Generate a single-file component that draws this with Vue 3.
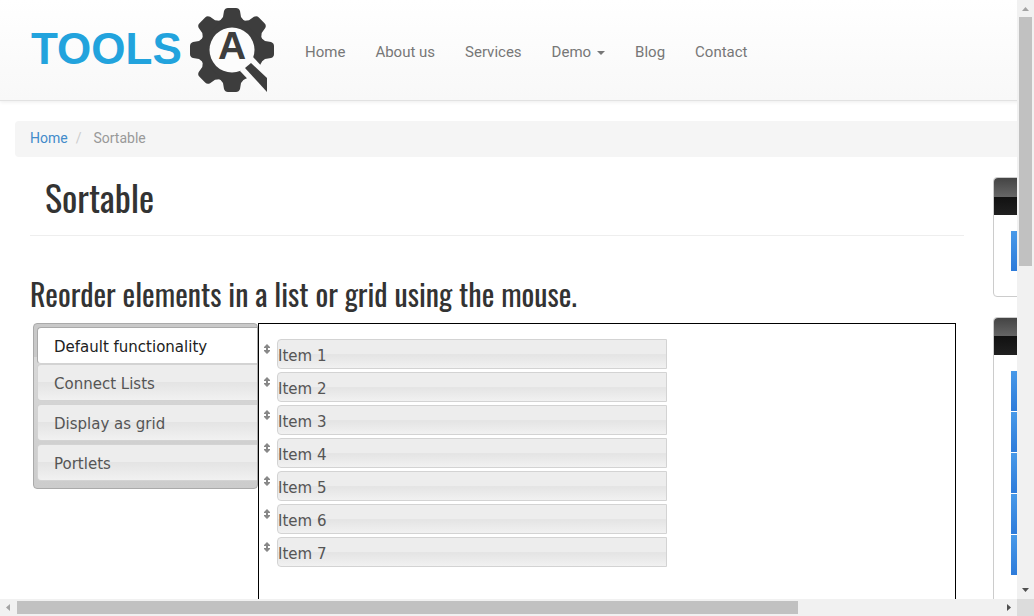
<script setup>
const links = ['Home', 'About us', 'Services', 'Demo', 'Blog', 'Contact']
const tabs = ['Default functionality', 'Connect Lists', 'Display as grid', 'Portlets']
const items = [1, 2, 3, 4, 5, 6, 7].map((n) => `Item ${n}`)
const teeth = [0, 45, 90, 180, 225, 270, 315]
</script>

<template>
  <div class="window">
    <div class="viewport">
      <div class="page">
        <header class="navbar">
          <a class="brand" href="#" aria-label="TOOLS QA">
            <svg width="250" height="100" viewBox="0 0 250 100">
              <text class="wordmark" x="3" y="64">TOOLS</text>
              <g transform="translate(204 50)" fill="#3d3d3d">
                <circle r="32" />
                <path
                  v-for="angle in teeth"
                  :key="angle"
                  :transform="`rotate(${angle})`"
                  d="M-13-28 L-9-33 L-8-39 Q-7-42-4-42 H4 Q7-42 8-39 L9-33 L13-28Z"
                />
                <circle r="22.500" fill="#fcfcfc" />
                <path d="M8 21 L21 7 L35 22 V42 L27 41Z" fill="#fbfbfb" />
                <path d="M13 18 L19 13 L35 28 V42Z" />
                <text class="mark" x="0" y="9" text-anchor="middle">A</text>
              </g>
            </svg>
          </a>
          <nav class="links">
            <a v-for="link in links" :key="link" href="#">{{ link }}<i v-if="link === 'Demo'" class="caret"></i></a>
          </nav>
        </header>

        <nav class="breadcrumb">
          <a href="#">Home</a><span class="slash">/</span><span>Sortable</span>
        </nav>

        <div class="columns">
          <main>
            <h1>Sortable</h1>
            <hr />
            <h2>Reorder elements in a list or grid using the mouse.</h2>
            <div class="tabs">
              <div class="tablist" role="tablist">
                <button
                  v-for="(tab, i) in tabs"
                  :key="tab"
                  type="button"
                  role="tab"
                  :aria-selected="i === 0"
                  :class="{ active: i === 0 }"
                >{{ tab }}</button>
              </div>
              <div class="panel" role="tabpanel">
                <ul>
                  <li v-for="item in items" :key="item">
                    <svg width="8" height="10" viewBox="0 0 8 10">
                      <path d="M4 0 L7 3 V4 H5 V6 H7 V7 L4 10 L1 7 V6 H3 V4 H1 V3Z" fill="#888" />
                    </svg>
                    <div class="item">{{ item }}</div>
                  </li>
                </ul>
              </div>
            </div>
          </main>
          <aside>
            <section class="widget">
              <div class="widget-head"></div>
              <div class="widget-body"><a href="#" aria-label="Registration"></a></div>
            </section>
            <section class="widget tall">
              <div class="widget-head"></div>
              <div class="widget-body"><a v-for="n in 5" :key="n" href="#" :aria-label="`Interaction ${n}`"></a></div>
            </section>
          </aside>
        </div>
      </div>
    </div>

    <div class="bar vertical">
      <svg width="17" height="17"><path d="M5 11 L8.500 7 L12 11Z" fill="#a3a3a3" /></svg>
      <div class="track"><div class="thumb"></div></div>
      <svg width="17" height="17"><path d="M5 6 H12 L8.500 10Z" fill="#505050" /></svg>
    </div>
    <div class="bar horizontal">
      <svg width="17" height="17"><path d="M10 5 V12 L6 8.500Z" fill="#a3a3a3" /></svg>
      <div class="track"><div class="thumb"></div></div>
      <svg width="17" height="17"><path d="M7 5 V12 L11 8.500Z" fill="#505050" /></svg>
    </div>
    <div class="corner"></div>
  </div>
</template>

<style>
body {
  margin: 0;
  background: #fff;
}
</style>

<style scoped>
* {
  box-sizing: border-box;
}
.window {
  display: grid;
  grid-template: minmax(0, 1fr) 17px / minmax(0, 1fr) 17px;
  height: 100vh;
  font-family: Roboto, sans-serif;
  font-size: 14px;
  line-height: 20px;
  color: #333;
}
.viewport {
  overflow: hidden;
}
.page {
  min-width: 1280px;
}
a {
  text-decoration: none;
}
.navbar {
  display: flex;
  height: 101px;
  padding-left: 28px;
  background: linear-gradient(#fff, #f8f8f8);
  border-bottom: 1px solid #e2e2e2;
  box-shadow: 0 1px 4px rgba(0, 0, 0, 0.08);
}
.brand svg {
  display: block;
}
.brand {
  width: 262px;
}
.wordmark {
  font: bold 44px "Liberation Sans", sans-serif;
  fill: #22a3dd;
}
.mark {
  font: bold 39px "Liberation Sans", sans-serif;
}
.links {
  display: flex;
  align-items: center;
  padding-top: 3px;
}
.links a {
  padding: 15px;
  font-size: 15px;
  color: #777;
}
.caret {
  display: inline-block;
  margin-left: 6px;
  vertical-align: middle;
  border-top: 4px solid #777;
  border-left: 4px solid transparent;
  border-right: 4px solid transparent;
}
.breadcrumb {
  margin: 20px 15px;
  padding: 7px 15px 9px;
  background: #f5f5f5;
  border-radius: 4px;
  color: #999;
}
.breadcrumb a {
  color: #428bca;
}
.slash {
  padding: 0 12px 0 8px;
  color: #ccc;
}
.columns {
  display: grid;
  grid-template-columns: minmax(0, 1fr) 257px;
  gap: 29px;
  padding: 0 30px;
}
h1,
h2 {
  margin: 0;
  font-family: Oswald, "Liberation Sans Narrow", "DejaVu Sans Condensed", sans-serif;
  font-weight: 400;
}
h1 {
  padding: 0 15px 18px;
  font-size: 36px;
  line-height: 40px;
}
hr {
  margin: 0;
  border: 0;
  border-top: 1px solid #eee;
}
h2 {
  margin-top: 38px;
  padding-bottom: 9px;
  font-size: 30px;
  line-height: 40px;
  white-space: nowrap;
}
.tabs {
  display: flex;
  align-items: flex-start;
  padding: 0 8px 0 3px;
  font-family: Verdana, "DejaVu Sans", sans-serif;
  font-size: 15px;
}
.tablist {
  display: flex;
  flex-direction: column;
  gap: 3px;
  width: 225px;
  padding: 3px 0 7px 3px;
  border: 1px solid #aaa;
  border-radius: 4px;
  background: linear-gradient(#c9c9c9 0 20%, #d8d8d8 20%, #ccc);
}
.tablist button {
  height: 37px;
  padding: 2px 16px 0;
  border: 1px solid #d3d3d3;
  border-right: 0;
  border-radius: 4px 0 0 4px;
  background: linear-gradient(#ededed 0 48%, #e4e4e4 50%, #f1f1f1);
  font: inherit;
  text-align: left;
  color: #555;
}
.tablist .active {
  margin-bottom: -3px;
  border-color: #aaa;
  border-bottom-color: #d3d3d3;
  background: #fff;
  color: #212121;
}
.panel {
  flex: 1;
  height: 400px;
  padding: 15px 0 0 4px;
  border: 1px solid #000;
}
ul {
  display: grid;
  gap: 3px;
  margin: 0;
  padding: 0;
  list-style: none;
}
li {
  display: flex;
  gap: 6px;
}
li svg {
  margin-top: 5px;
}
.item {
  width: 390px;
  height: 30px;
  border: 1px solid #d3d3d3;
  border-radius: 4px 0 0 4px;
  background: linear-gradient(#ededed 0 50%, #e4e4e4 52%, #f1f1f1);
  line-height: 32px;
  color: #555;
}
.widget {
  margin-bottom: 20px;
  min-height: 120px;
  border: 1px solid #ccc;
  border-radius: 4px;
}
.tall {
  min-height: 340px;
}
.widget-head {
  height: 37px;
  border-radius: 4px 4px 0 0;
  background: linear-gradient(#444, #666 50%, #111 50%, #202020);
}
.widget-body {
  display: grid;
  gap: 1px;
  padding: 16px 17px;
}
.widget-body a {
  height: 40px;
  background: linear-gradient(#4899e8, #2d7bda);
}
.bar {
  display: flex;
  background: #f1f1f1;
}
.vertical {
  flex-direction: column;
}
.track {
  flex: 1;
}
.thumb {
  background: #c1c1c1;
}
.vertical .thumb {
  width: 13px;
  height: 44%;
  margin: 0 2px;
}
.horizontal .thumb {
  width: 79.4%;
  height: 13px;
  margin: 2px 0;
}
.corner {
  background: #dcdcdc;
}
</style>
